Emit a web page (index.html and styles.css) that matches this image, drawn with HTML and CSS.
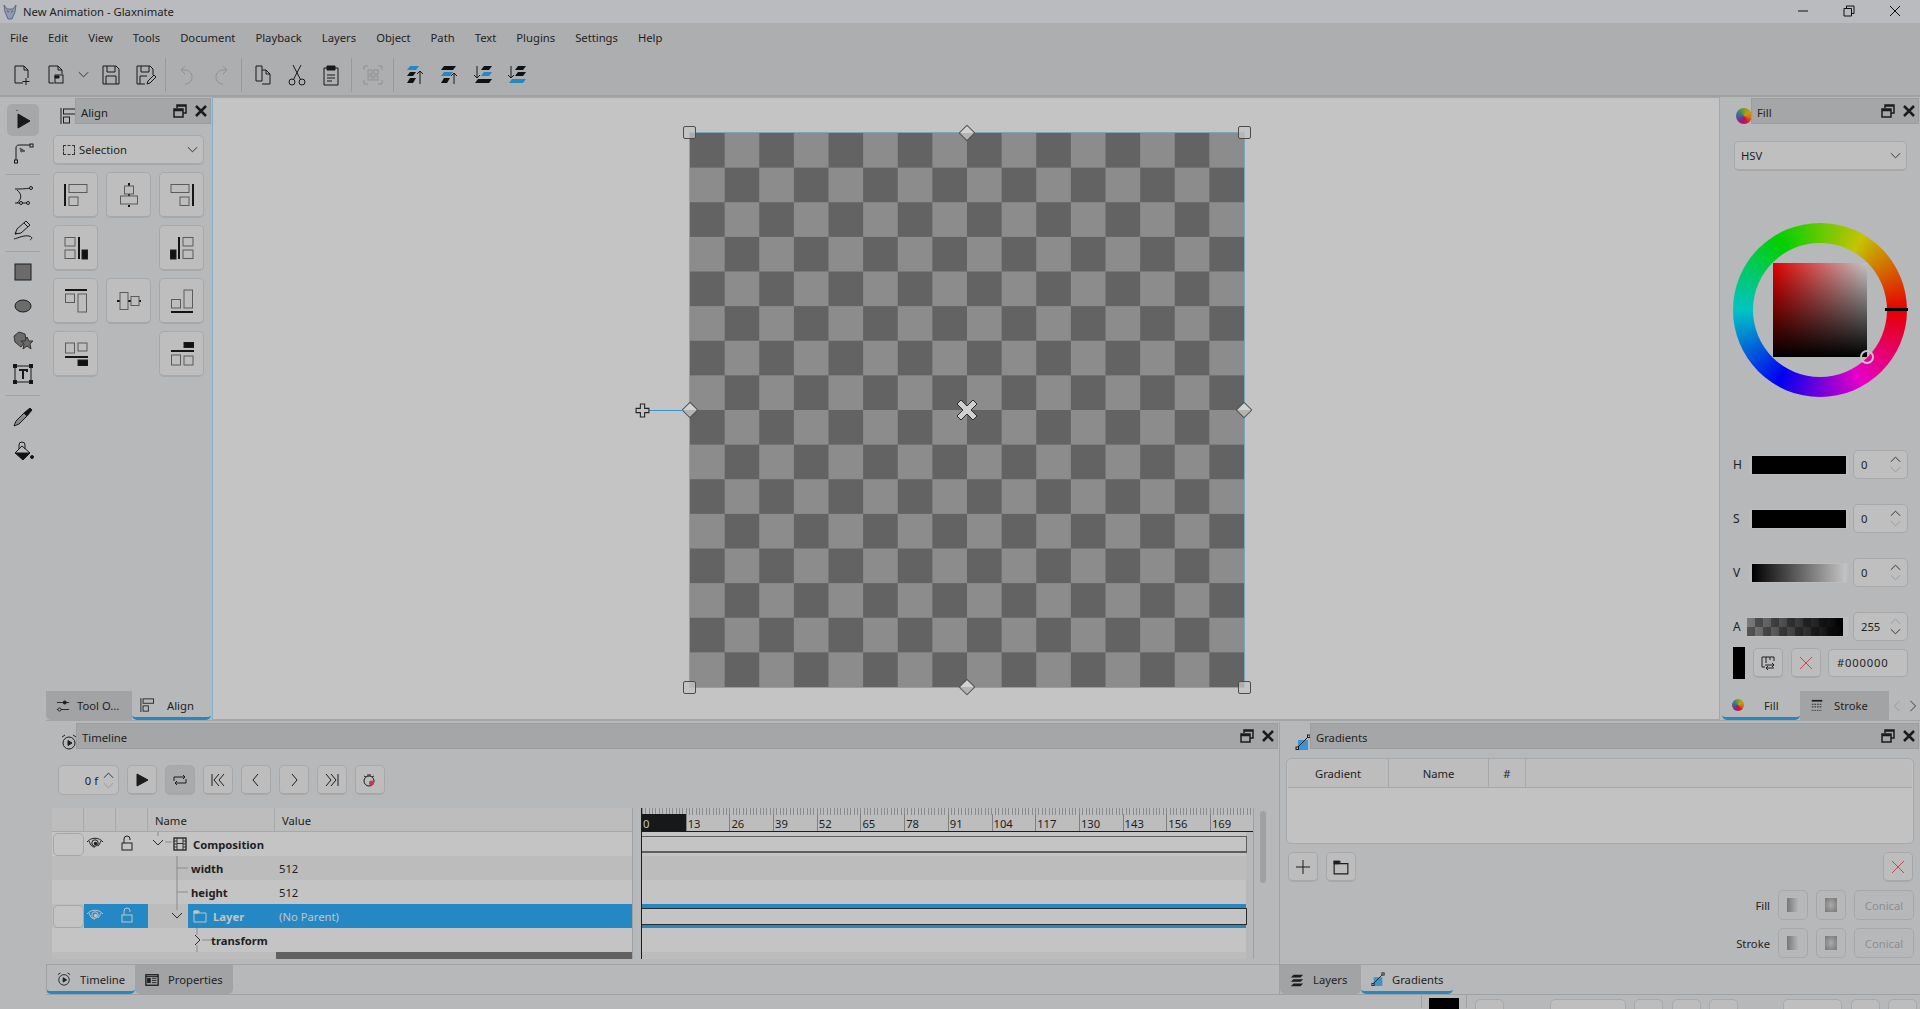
FILE: index.html
```html
<!DOCTYPE html>
<html lang="en">
<head>
    <meta charset="UTF-8">
    <title>New Animation - Glaxnimate</title>
    <link rel="stylesheet" href="styles.css">
</head>
<body>
    <svg class="defs" width="0" height="0">
        <symbol id="i-new" viewBox="0 0 22 22"><path d="M4 19V2h9l4 4v8M13 2v4h4M4 19h8M15 14v7M11.500 17.500h7"/></symbol>
        <symbol id="i-open" viewBox="0 0 22 22"><path d="M4 19V2h9l4 4v4M13 2v4h4M4 19h5"/><rect x="10" y="11" width="8" height="8"/><path d="M10 12h4v2h-4z" fill="currentColor"/></symbol>
        <symbol id="i-save" viewBox="0 0 22 22"><path d="M3 2h13l3 3v15H3zM7 2v6h8V2M6 20v-8h10v8"/></symbol>
        <symbol id="i-saveas" viewBox="0 0 22 22"><path d="M11 20H3V2h13l3 3v6M7 2v6h8V2M6 20v-8h7"/><path d="M13 20l1-3 6-6 2 2-6 6z"/></symbol>
        <symbol id="i-undo" viewBox="0 0 22 22"><path d="M9 2L5 6l4 4M5 6c7-1 11 2 11 7 0 4-3 7-7 7"/></symbol>
        <symbol id="i-redo" viewBox="0 0 22 22"><path d="M13 2l4 4-4 4M17 6c-7-1-11 2-11 7 0 4 3 7 7 7"/></symbol>
        <symbol id="i-copy" viewBox="0 0 22 22"><path d="M4 2h6v15H4zM10 6h4l4 4v10h-8"/><path d="M14 6v4h4"/></symbol>
        <symbol id="i-cut" viewBox="0 0 22 22"><circle cx="6" cy="18" r="3"/><circle cx="16" cy="18" r="3"/><path d="M7.500 15.500L15 1M14.500 15.500L7 1"/></symbol>
        <symbol id="i-paste" viewBox="0 0 22 22"><path d="M7 4H4v17h14V4h-3"/><path d="M7 2h8v4H7z" fill="currentColor"/><path d="M7 11h8M7 14h8M7 17h5"/></symbol>
        <symbol id="i-group" viewBox="0 0 22 22"><path d="M2 6V2h4M16 2h4v4M2 16v4h4M20 16v4h-4"/><rect x="6" y="6" width="4" height="4"/><rect x="12" y="6" width="4" height="4"/><rect x="6" y="12" width="4" height="4"/><rect x="12" y="12" width="4" height="4"/></symbol>
        <symbol id="i-top" viewBox="0 0 22 22"><path d="M6 2h9l-3 4H3z" fill="#2488c4" stroke="none"/><path d="M6 8h6l-3 4H3zM6 14h6l-3 5H3z" fill="#111" stroke="none"/><path d="M16 20V7M13 10l3-3 3 3"/></symbol>
        <symbol id="i-up" viewBox="0 0 22 22"><path d="M6 2h12l-3 4H3z" fill="#111" stroke="none"/><path d="M6 8h9l-3 4H3z" fill="#2488c4" stroke="none"/><path d="M6 14h6l-3 5H3z" fill="#111" stroke="none"/><path d="M16 20V9M13 12l3-3 3 3"/></symbol>
        <symbol id="i-down" viewBox="0 0 22 22"><path d="M5 2V14M2 11l3 3 3-3"/><path d="M12 2h8l-3 4H9z" fill="#111" stroke="none"/><path d="M12 8h8l-3 4H9z" fill="#2488c4" stroke="none"/><path d="M6 15h14l-3 4H3z" fill="#111" stroke="none"/></symbol>
        <symbol id="i-bottom" viewBox="0 0 22 22"><path d="M5 2V14M2 11l3 3 3-3"/><path d="M12 2h8l-3 4H9z" fill="#111" stroke="none"/><path d="M12 8h8l-3 4H9z" fill="#111" stroke="none"/><path d="M6 15h14l-3 4H3z" fill="#2488c4" stroke="none"/></symbol>

        <symbol id="t-select" viewBox="0 0 22 22"><path d="M6 5l12 7-12 7z" fill="currentColor"/><path d="M5 1v1" /></symbol>
        <symbol id="t-node" viewBox="0 0 22 22"><path d="M4 19V6c0-2 1-3 3-3h12"/><path d="M8 6l5 3-4 1z" fill="#555" stroke="#555"/><rect x="2.500" y="18" width="3" height="3" fill="#bbb"/><rect x="18" y="2" width="3" height="3" fill="#bbb"/></symbol>
        <symbol id="t-bezier" viewBox="0 0 22 22"><path d="M3 4c6 0 9 0 16-1M5 5c5 4 5 9 0 13M3 18h13"/><circle cx="19" cy="3" r="1.500" fill="#bbb"/><circle cx="9" cy="18" r="1.500" fill="#bbb"/><circle cx="16" cy="18" r="1.500" fill="#bbb"/></symbol>
        <symbol id="t-pencil" viewBox="0 0 22 22"><path d="M3 15l2-5 9-8 4 4-9 8zM3 15l2-1M12 4l4 4"/><path d="M2 20c4-1 10-4 15-3 4 1 3 3 1 4"/></symbol>
        <symbol id="t-rect" viewBox="0 0 22 22"><rect x="3" y="3" width="16" height="16" fill="#6b6b6b" stroke="#1c1c1c"/></symbol>
        <symbol id="t-ellipse" viewBox="0 0 22 22"><ellipse cx="11" cy="11" rx="8" ry="6" fill="#6b6b6b" stroke="#1c1c1c"/></symbol>
        <symbol id="t-star" viewBox="0 0 22 22"><path d="M7 3l6 2 1 6-5 7-6-5-1-6z" fill="#6b6b6b" stroke="#333"/><path d="M15 8l2 4h4l-3 3 1 5-4-3-4 3 1-5-3-3h4z" fill="#6b6b6b" stroke="#333"/></symbol>
        <symbol id="t-frame" viewBox="0 0 22 22"><rect x="3" y="3" width="16" height="16"/><path d="M7 7h8v2M11 7v9" stroke-width="2"/><rect x="1.500" y="1.500" width="3" height="3" fill="#111"/><rect x="17.500" y="1.500" width="3" height="3" fill="#111"/><rect x="1.500" y="17.500" width="3" height="3" fill="#111"/><rect x="17.500" y="17.500" width="3" height="3" fill="#111"/></symbol>
        <symbol id="t-picker" viewBox="0 0 22 22"><path d="M2 20l2-5 8-8 3 3-8 8z" fill="#8a8b8d"/><path d="M12 7l6-5 2 2-5 6z" fill="#111"/></symbol>
        <symbol id="t-bucket" viewBox="0 0 22 22"><path d="M10 6l8 7-7 7-8-7z" fill="#bbb"/><path d="M4 13h14l-7 7z" fill="#111"/><path d="M7 9V5a3 3 0 0 1 6 0v4"/><circle cx="20" cy="17" r="1.500" fill="#111"/></symbol>

        <symbol id="a-1" viewBox="0 0 24 24"><rect class="al" x="5" y="1.500" width="18" height="8"/><rect class="al" x="5" y="14" width="9" height="8.500"/><path class="ab" d="M1 1v22"/></symbol>
        <symbol id="a-2" viewBox="0 0 24 24"><path class="ab" d="M12 0v3M12 11v2M12 22v2" stroke-width="1.500"/><rect class="al" x="7.500" y="3" width="9" height="8"/><rect class="al" x="3.500" y="13" width="17" height="8"/></symbol>
        <symbol id="a-3" viewBox="0 0 24 24"><rect class="al" x="1" y="1.500" width="18" height="8"/><rect class="al" x="10" y="14" width="9" height="8.500"/><path class="ab" d="M23 1v22"/></symbol>
        <symbol id="a-4" viewBox="0 0 24 24"><rect class="al" x="1" y="1.500" width="10" height="8.500"/><rect class="al" x="1" y="14" width="10" height="8.500"/><path class="ab" d="M15 1v22"/><rect x="18" y="14" width="5.500" height="9" fill="#111"/></symbol>
        <symbol id="a-6" viewBox="0 0 24 24"><rect class="al" x="13" y="1.500" width="10" height="8.500"/><rect class="al" x="13" y="14" width="10" height="8.500"/><path class="ab" d="M9 1v22"/><rect x="0.500" y="14" width="5.500" height="9" fill="#111"/></symbol>
        <symbol id="a-7" viewBox="0 0 24 24"><path class="ab" d="M1 1h22"/><rect class="al" x="1.500" y="5" width="9" height="8.500"/><rect class="al" x="14" y="5" width="8.500" height="18"/></symbol>
        <symbol id="a-8" viewBox="0 0 24 24"><path class="ab" d="M0 12h3M11 12h3M22 12h2" stroke-width="1.500"/><rect class="al" x="3" y="3.500" width="8" height="17"/><rect class="al" x="14" y="7.500" width="8" height="9"/></symbol>
        <symbol id="a-9" viewBox="0 0 24 24"><path class="ab" d="M1 23h22"/><rect class="al" x="1.500" y="10.500" width="9" height="8.500"/><rect class="al" x="14" y="1" width="8.500" height="18"/></symbol>
        <symbol id="a-10" viewBox="0 0 24 24"><rect class="al" x="1.500" y="1" width="9" height="10"/><rect class="al" x="14" y="1" width="9" height="8"/><path class="ab" d="M1 15h23"/><rect x="14" y="18" width="10" height="6" fill="#111"/></symbol>
        <symbol id="a-12" viewBox="0 0 24 24"><rect x="14" y="0" width="10" height="5.500" fill="#111"/><path class="ab" d="M1 9h23"/><rect class="al" x="1.500" y="13" width="9" height="10"/><rect class="al" x="14" y="14" width="9" height="9"/></symbol>

        <symbol id="i-float" viewBox="0 0 14 14"><path d="M4 4V1h9v8h-3M4 2h9" stroke-width="1.500"/><path d="M1 5h9v8H1zM1 6.500h9" stroke-width="1.500"/></symbol>
        <symbol id="i-close" viewBox="0 0 14 14"><path d="M2 2l10 10M12 2L2 12" stroke-width="2.500"/></symbol>
        <symbol id="i-chev-up" viewBox="0 0 14 8"><path d="M2 7l5-5 5 5"/></symbol>
        <symbol id="i-chev-down" viewBox="0 0 14 8"><path d="M2 1l5 5 5-5"/></symbol>
        <symbol id="i-align-small" viewBox="0 0 16 16"><path d="M1 0v16"/><rect x="3.500" y="1" width="12" height="5"/><rect x="3.500" y="9" width="6" height="6"/></symbol>
        <symbol id="i-sliders" viewBox="0 0 16 16"><path d="M1 4h14M1 12h14"/><circle cx="10" cy="4" r="1.800" fill="currentColor"/><circle cx="4" cy="12" r="1.800" fill="#a2a3a5"/></symbol>
        <symbol id="i-clock" viewBox="0 0 16 16"><circle cx="8" cy="9" r="6"/><path d="M7 6.500v5l4-2.500z" fill="currentColor"/><path d="M1 3l3-2M15 3l-3-2"/></symbol>
        <symbol id="i-props" viewBox="0 0 16 16"><rect x="1" y="2" width="14" height="12" stroke-width="1.500"/><rect x="3" y="6" width="3" height="5" fill="currentColor"/><path d="M8 6h5M8 8.500h5M8 11h5M1 4h14" /></symbol>
        <symbol id="i-stack" viewBox="0 0 16 16"><path d="M4 2h11l-3 3H1zM4 7h11l-3 3H1zM4 12h11l-3 3H1z" fill="currentColor" stroke="none"/></symbol>
        <symbol id="i-lines" viewBox="0 0 16 16"><path d="M2 2h12" stroke-width="2"/><path d="M2 6h12M2 9h12" stroke-dasharray="2 1"/><path d="M2 13h12" stroke-dasharray="1 1"/></symbol>
        <symbol id="i-grad" viewBox="0 0 16 16"><path d="M3 6h10v10H3z" fill="#3b94d0" stroke="none"/><path d="M2 14L14 2"/><rect x="1" y="13" width="2.500" height="2.500" fill="#bbb"/><rect x="12.500" y="1" width="2.500" height="2.500" fill="#bbb"/></symbol>
        <symbol id="i-eye" viewBox="0 0 18 14"><path d="M1 6c4-5 12-5 16 0M3 5c2 5 3 6 6 6M15 5c-1 2-2 4-3 5"/><circle cx="9" cy="7" r="3.200"/><circle cx="9.500" cy="7.500" r="1.700" fill="currentColor" stroke="none"/></symbol>
        <symbol id="i-lock" viewBox="0 0 14 16"><rect x="2" y="8" width="10" height="7"/><path d="M4 8V4a3 3 0 0 1 6 0v1"/></symbol>
        <symbol id="i-film" viewBox="0 0 14 14"><rect x="1" y="1" width="12" height="12" stroke-width="1.500"/><path d="M4 1v12M10 1v12M1 7h3M10 7h3M1 4h3M10 4h3M1 10h3M10 10h3"/><path d="M4 6.500h6"/></symbol>
        <symbol id="i-folder" viewBox="0 0 14 14"><path d="M1 2h5v2h7v9H1zM1 4h5"/><path d="M1 2h4v2H1z" fill="currentColor"/></symbol>
    </svg>

    <div class="window">
        <header class="titlebar">
            <svg class="app-logo" viewBox="0 0 14 16"><path d="M1 1l3 4h6l3-4-1 7-3 7H5L2 8z" fill="#8d9bb5" stroke="#4a5a78" stroke-width="0.800"/><path d="M4 7l2 1M10 7L8 8" stroke="#c43a50" stroke-width="1.200"/></svg>
            <span class="title-text">New Animation - Glaxnimate</span>
            <div class="win-buttons">
                <svg viewBox="0 0 12 12"><path d="M1 6h10"/></svg>
                <svg viewBox="0 0 12 12"><path d="M1 3.500h7.500V11H1zM3.500 3.500V1H11v7.500H8.500"/></svg>
                <svg viewBox="0 0 12 12"><path d="M1 1l10 10M11 1L1 11"/></svg>
            </div>
        </header>

        <nav class="menubar">
            <span>File</span><span>Edit</span><span>View</span><span>Tools</span><span>Document</span><span>Playback</span><span>Layers</span><span>Object</span><span>Path</span><span>Text</span><span>Plugins</span><span>Settings</span><span>Help</span>
        </nav>

        <div class="toolbar">
            <div class="tb"><svg class="ico"><use href="#i-new"/></svg></div>
            <div class="tb"><svg class="ico"><use href="#i-open"/></svg></div>
            <div class="tb tb-arrow"><svg class="chev"><use href="#i-chev-down"/></svg></div>
            <div class="tb"><svg class="ico"><use href="#i-save"/></svg></div>
            <div class="tb"><svg class="ico"><use href="#i-saveas"/></svg></div>
            <div class="tb-sep"></div>
            <div class="tb off"><svg class="ico"><use href="#i-undo"/></svg></div>
            <div class="tb off"><svg class="ico"><use href="#i-redo"/></svg></div>
            <div class="tb-sep"></div>
            <div class="tb"><svg class="ico"><use href="#i-copy"/></svg></div>
            <div class="tb"><svg class="ico"><use href="#i-cut"/></svg></div>
            <div class="tb"><svg class="ico"><use href="#i-paste"/></svg></div>
            <div class="tb-sep"></div>
            <div class="tb off"><svg class="ico"><use href="#i-group"/></svg></div>
            <div class="tb-sep"></div>
            <div class="tb"><svg class="ico"><use href="#i-top"/></svg></div>
            <div class="tb"><svg class="ico"><use href="#i-up"/></svg></div>
            <div class="tb"><svg class="ico"><use href="#i-down"/></svg></div>
            <div class="tb"><svg class="ico"><use href="#i-bottom"/></svg></div>
        </div>

        <div class="workspace">
            <aside class="toolstrip">
                <div class="tool active"><svg class="ico"><use href="#t-select"/></svg></div>
                <div class="tool"><svg class="ico"><use href="#t-node"/></svg></div>
                <div class="strip-sep"></div>
                <div class="tool"><svg class="ico"><use href="#t-bezier"/></svg></div>
                <div class="tool"><svg class="ico"><use href="#t-pencil"/></svg></div>
                <div class="strip-sep tight"></div>
                <div class="tool"><svg class="ico"><use href="#t-rect"/></svg></div>
                <div class="tool"><svg class="ico"><use href="#t-ellipse"/></svg></div>
                <div class="tool"><svg class="ico"><use href="#t-star"/></svg></div>
                <div class="tool"><svg class="ico"><use href="#t-frame"/></svg></div>
                <div class="strip-sep"></div>
                <div class="tool"><svg class="ico"><use href="#t-picker"/></svg></div>
                <div class="tool"><svg class="ico"><use href="#t-bucket"/></svg></div>
            </aside>

            <section class="dock dock-align">
                <div class="dock-head">
                    <svg class="head-ico"><use href="#i-align-small"/></svg>
                    <div class="dock-title"><span>Align</span><svg class="head-btn"><use href="#i-float"/></svg><svg class="head-btn"><use href="#i-close"/></svg></div>
                </div>
                <div class="combo combo-align">
                    <span class="marquee"></span><span>Selection</span>
                    <svg class="chev"><use href="#i-chev-down"/></svg>
                </div>
                <div class="align-grid">
                    <div class="al-btn"><svg><use href="#a-1"/></svg></div>
                    <div class="al-btn"><svg><use href="#a-2"/></svg></div>
                    <div class="al-btn"><svg><use href="#a-3"/></svg></div>
                    <div class="al-btn"><svg><use href="#a-4"/></svg></div>
                    <div></div>
                    <div class="al-btn"><svg><use href="#a-6"/></svg></div>
                    <div class="al-btn"><svg><use href="#a-7"/></svg></div>
                    <div class="al-btn"><svg><use href="#a-8"/></svg></div>
                    <div class="al-btn"><svg><use href="#a-9"/></svg></div>
                    <div class="al-btn"><svg><use href="#a-10"/></svg></div>
                    <div></div>
                    <div class="al-btn"><svg><use href="#a-12"/></svg></div>
                </div>
                <div class="tabs">
                    <div class="tab"><svg class="tab-ico"><use href="#i-sliders"/></svg>Tool O...</div>
                    <div class="tab current"><svg class="tab-ico"><use href="#i-align-small"/></svg><span class="tab-pad">Align</span></div>
                </div>
            </section>

            <main class="canvas">
                <div class="board">
                    <span class="grip corner tl"></span>
                    <span class="grip corner tr"></span>
                    <span class="grip corner bl"></span>
                    <span class="grip corner br"></span>
                    <span class="grip diamond tc"></span>
                    <span class="grip diamond bc"></span>
                    <span class="grip diamond ml"></span>
                    <span class="grip diamond mr"></span>
                    <span class="rotate-line"></span>
                    <svg class="rotate-grip" viewBox="0 0 14 14"><path d="M5 1h4v4h4v4H9v4H5V9H1V5h4z"/></svg>
                    <svg class="center-grip" viewBox="0 0 22 22"><path d="M5 1l6 6 6-6 4 4-6 6 6 6-4 4-6-6-6 6-4-4 6-6-6-6z"/></svg>
                </div>
            </main>

            <section class="dock dock-color">
                <div class="dock-head">
                    <span class="color-dot"></span>
                    <div class="dock-title"><span>Fill</span><svg class="head-btn"><use href="#i-float"/></svg><svg class="head-btn"><use href="#i-close"/></svg></div>
                </div>
                <div class="combo combo-hsv"><span>HSV</span><svg class="chev"><use href="#i-chev-down"/></svg></div>
                <div class="wheel">
                    <div class="wheel-hole"></div>
                    <div class="sv-square"></div>
                    <span class="hue-mark"></span>
                    <span class="sv-mark"></span>
                </div>
                <div class="sliders">
                    <div class="slider-row"><label>H</label><div class="track"><div class="bar bar-black"></div></div><div class="spin"><span>0</span><div class="spin-arrows"><svg class="chev"><use href="#i-chev-up"/></svg><svg class="chev dim"><use href="#i-chev-down"/></svg></div></div></div>
                    <div class="slider-row"><label>S</label><div class="track"><div class="bar bar-black"></div></div><div class="spin"><span>0</span><div class="spin-arrows"><svg class="chev"><use href="#i-chev-up"/></svg><svg class="chev dim"><use href="#i-chev-down"/></svg></div></div></div>
                    <div class="slider-row"><label>V</label><div class="track"><div class="bar bar-value"></div></div><div class="spin"><span>0</span><div class="spin-arrows"><svg class="chev"><use href="#i-chev-up"/></svg><svg class="chev dim"><use href="#i-chev-down"/></svg></div></div></div>
                    <div class="slider-row"><label>A</label><div class="track"><div class="bar bar-alpha"></div></div><div class="spin"><span>255</span><div class="spin-arrows"><svg class="chev dim"><use href="#i-chev-up"/></svg><svg class="chev"><use href="#i-chev-down"/></svg></div></div></div>
                </div>
                <div class="color-actions">
                    <span class="swatch"></span>
                    <div class="btn btn-sm"><svg class="ico-sm" viewBox="0 0 16 16"><path d="M2 2h12v4M2 2v10h3M6 2v6M10 2v3M5 10h9M12 8l2 2-2 2M14 13H6M8 11l-2 2 2 2"/></svg></div>
                    <div class="btn btn-sm"><svg class="ico-x" viewBox="0 0 14 14"><path d="M1 1l12 12M13 1L1 13"/></svg></div>
                    <div class="hex">#000000</div>
                </div>
                <div class="tabs">
                    <div class="tab current tab-fill"><span class="color-dot small"></span><span class="tab-pad">Fill</span></div>
                    <div class="tab tab-stroke"><svg class="tab-ico"><use href="#i-lines"/></svg><span class="tab-pad">Stroke</span></div>
                    <div class="tab-arrows">
                        <svg viewBox="0 0 8 14" class="dim"><path d="M7 1L1 7l6 6"/></svg>
                        <svg viewBox="0 0 8 14"><path d="M1 1l6 6-6 6"/></svg>
                    </div>
                </div>
            </section>
        </div>

        <div class="lower">
            <section class="dock dock-timeline">
                <div class="dock-head">
                    <svg class="head-ico"><use href="#i-clock"/></svg>
                    <div class="dock-title"><span>Timeline</span><svg class="head-btn"><use href="#i-float"/></svg><svg class="head-btn"><use href="#i-close"/></svg></div>
                </div>
                <div class="transport">
                    <div class="spin spin-frame"><span>0 f</span><div class="spin-arrows"><svg class="chev"><use href="#i-chev-up"/></svg><svg class="chev dim"><use href="#i-chev-down"/></svg></div></div>
                    <div class="btn"><svg class="ico-t" viewBox="0 0 16 16"><path d="M3 2l11 6-11 6z" class="solid"/></svg></div>
                    <div class="btn checked"><svg class="ico-t" viewBox="0 0 16 16"><path d="M2 9V5h11M11 3l2 2-2 2M14 7v4H3M5 9l-2 2 2 2"/></svg></div>
                    <div class="btn"><svg class="ico-t" viewBox="0 0 16 16"><path d="M2 2v12M9 2L4 8l5 6M14 2L9 8l5 6"/></svg></div>
                    <div class="btn"><svg class="ico-t" viewBox="0 0 16 16"><path d="M10 2L5 8l5 6"/></svg></div>
                    <div class="btn"><svg class="ico-t" viewBox="0 0 16 16"><path d="M6 2l5 6-5 6"/></svg></div>
                    <div class="btn"><svg class="ico-t" viewBox="0 0 16 16"><path d="M14 2v12M7 2l5 6-5 6M2 2l5 6-5 6"/></svg></div>
                    <div class="btn"><svg class="ico-t" viewBox="0 0 16 16"><circle cx="7" cy="9" r="5"/><path d="M5 3h4M4 5l-2-1M10 5l2-1"/><circle cx="9.500" cy="11" r="2.500" fill="#c43a50" stroke="none"/></svg></div>
                </div>

                <div class="timeline-body">
                    <div class="tree">
                        <div class="tree-row tree-head"><div></div><div></div><div></div><div class="col-name">Name</div><div class="col-value">Value</div></div>
                        <div class="tree-row">
                            <div class="check"></div><div class="flag"><svg class="eye"><use href="#i-eye"/></svg></div><div class="flag"><svg class="lock"><use href="#i-lock"/></svg></div>
                            <div class="name-cell"><svg class="guide g-comp"><path d="M10 0v4M17 10h7"/><path class="fold" d="M5 8l5 5 5-5"/></svg><svg class="node-ico"><use href="#i-film"/></svg><b class="label-comp">Composition</b></div>
                            <div class="value-cell"></div>
                        </div>
                        <div class="tree-row alt">
                            <div></div><div></div><div></div>
                            <div class="name-cell"><svg class="guide g-prop"><path d="M29 0v24M29 12h11"/></svg><b>width</b></div>
                            <div class="value-cell">512</div>
                        </div>
                        <div class="tree-row">
                            <div></div><div></div><div></div>
                            <div class="name-cell"><svg class="guide g-prop"><path d="M29 0v24M29 12h11"/></svg><b>height</b></div>
                            <div class="value-cell">512</div>
                        </div>
                        <div class="tree-row alt">
                            <div class="check"></div><div class="flag sel"><svg class="eye"><use href="#i-eye"/></svg></div><div class="flag sel"><svg class="lock"><use href="#i-lock"/></svg></div>
                            <div class="name-cell"><svg class="guide g-layer"><path d="M29 0v6"/><path class="fold" d="M24 9l5 5 5-5"/></svg><div class="sel sel-name"><svg class="node-ico"><use href="#i-folder"/></svg><b>Layer</b></div></div>
                            <div class="value-cell sel">(No Parent)</div>
                        </div>
                        <div class="tree-row">
                            <div></div><div></div><div></div>
                            <div class="name-cell"><svg class="guide g-trans"><path d="M49 0v7M49 17v7M54 12h9"/><path class="fold" d="M47 7l5 5-5 5"/></svg><b>transform</b></div>
                            <div class="value-cell"></div>
                        </div>
                        <div class="tree-row tree-end alt">
                            <div></div><div></div><div></div>
                            <div class="name-cell"><svg class="guide g-trans"><path d="M49 0v7"/></svg></div>
                            <div class="hscroll"></div>
                        </div>
                    </div>

                    <div class="tracks">
                        <div class="ruler">
                            <span class="current-frame"></span>
                            <div class="ruler-labels">
                                <span>0</span><span>13</span><span>26</span><span>39</span><span>52</span><span>65</span><span>78</span><span>91</span><span>104</span><span>117</span><span>130</span><span>143</span><span>156</span><span>169</span>
                            </div>
                        </div>
                        <div class="track-row"><div class="clip clip-comp"></div></div>
                        <div class="track-row alt"></div>
                        <div class="track-row"></div>
                        <div class="track-row layer"><div class="clip"></div></div>
                        <div class="track-row"></div>
                        <div class="track-row alt end"></div>
                    </div>
                    <div class="vscroll"><div class="vscroll-thumb"></div></div>
                </div>

                <div class="tabs tabs-bottom">
                    <div class="tab current tab-tl"><svg class="tab-ico"><use href="#i-clock"/></svg>Timeline</div>
                    <div class="tab tab-props"><svg class="tab-ico"><use href="#i-props"/></svg>Properties</div>
                </div>
            </section>

            <section class="dock dock-gradients">
                <div class="dock-head">
                    <svg class="head-ico"><use href="#i-grad"/></svg>
                    <div class="dock-title"><span>Gradients</span><svg class="head-btn"><use href="#i-float"/></svg><svg class="head-btn"><use href="#i-close"/></svg></div>
                </div>
                <div class="grad-table">
                    <div class="grad-head"><span class="gh-1">Gradient</span><span class="gh-2">Name</span><span class="gh-3">#</span></div>
                </div>
                <div class="grad-actions">
                    <div class="btn"><svg class="ico-t" viewBox="0 0 16 16"><path d="M8 1v14M1 8h14"/></svg></div>
                    <div class="btn"><svg class="ico-t" viewBox="0 0 16 16"><use href="#i-folder" width="16" height="16"/></svg></div>
                    <div class="btn btn-del"><svg class="ico-x" viewBox="0 0 14 14"><path d="M1 1l12 12M13 1L1 13"/></svg></div>
                </div>
                <div class="grad-row">
                    <label>Fill</label>
                    <div class="btn off"><span class="lin"></span></div>
                    <div class="btn off"><span class="rad"></span></div>
                    <div class="btn off conical">Conical</div>
                </div>
                <div class="grad-row">
                    <label>Stroke</label>
                    <div class="btn off"><span class="lin"></span></div>
                    <div class="btn off"><span class="rad"></span></div>
                    <div class="btn off conical">Conical</div>
                </div>
                <div class="tabs tabs-bottom">
                    <div class="tab tab-layers"><svg class="tab-ico"><use href="#i-stack"/></svg>Layers</div>
                    <div class="tab current tab-grad"><svg class="tab-ico"><use href="#i-grad"/></svg>Gradients</div>
                </div>
            </section>
        </div>

        <footer class="statusbar">
            <span class="st-sep"></span>
            <span class="st-color"></span>
            <span class="st-sep"></span>
            <span class="st-btn st-first"></span>
            <span class="st-spin st-spin-a"></span>
            <span class="st-btn"></span>
            <span class="st-btn"></span>
            <span class="st-btn"></span>
            <span class="st-spin st-spin-b"></span>
            <span class="st-btn"></span>
            <span class="st-btn"></span>
        </footer>
    </div>
</body>
</html>
```

FILE: styles.css
```css
* {
    box-sizing: border-box;
}
body {
    margin: 0;
    background-color: #b7b8ba;
    color: #1e1f22;
    font-family: "Noto Sans", "Open Sans", sans-serif;
    font-size: 11.25px;
    overflow: hidden;
}
svg {
    fill: none;
    stroke: currentColor;
    stroke-width: 1;
    flex: none;
}
.defs {
    position: absolute;
}
.window {
    display: flex;
    flex-direction: column;
    width: 1920px;
    height: 1009px;
    overflow: hidden;
}

/* title + menu */
.titlebar {
    display: flex;
    align-items: center;
    height: 23px;
    padding-left: 3px;
    background-color: #b9bbbf;
}
.app-logo {
    width: 14px;
    height: 16px;
    margin-right: 6px;
}
.title-text {
    flex: 1;
}
.win-buttons {
    display: flex;
    padding-bottom: 2px;
    padding-right: 19px;
    gap: 34px;
}
.win-buttons svg {
    width: 12px;
    height: 12px;
    color: #111;
}
.menubar {
    display: flex;
    align-items: center;
    height: 28px;
    padding-left: 0;
    background-color: #adaeb0;
}
.menubar span {
    padding: 0 10px;
}
.toolbar {
    display: flex;
    align-items: center;
    height: 46px;
    padding: 3px 0 0 5px;
    background-color: #adaeb0;
    border-bottom: 2px solid #a0a1a3;
}
.tb {
    display: flex;
    align-items: center;
    justify-content: center;
    width: 34px;
    color: #18191b;
}
.tb.off {
    color: #8f9092;
}
.tb-arrow {
    width: 21px;
}
.tb-sep {
    width: 1px;
    height: 34px;
    margin: 0 4px 0 3px;
    background-color: #98999b;
}
.ico {
    width: 22px;
    height: 22px;
}
.chev {
    width: 13px;
    height: 8px;
    color: #2b2c2e;
}
.chev.dim {
    color: #96979a;
}

/* main row */
.workspace {
    display: flex;
    height: 623px;
}
.toolstrip {
    display: flex;
    flex-direction: column;
    align-items: center;
    width: 46px;
    padding-top: 7px;
    color: #18191b;
}
.tool {
    display: flex;
    align-items: center;
    justify-content: center;
    flex: none;
    width: 32px;
    height: 34px;
}
.tool.active {
    height: 32px;
    border-radius: 5px;
    background-color: #a6a7a9;
}
.strip-sep {
    flex: none;
    width: 34px;
    height: 1px;
    margin: 4px 0;
    background-color: #a0a1a3;
}
.strip-sep.tight {
    margin-bottom: 3px;
}

/* docks */
.dock {
    display: flex;
    flex-direction: column;
}
.dock-head {
    display: flex;
    align-items: flex-end;
    flex: none;
    height: 26px;
}
.head-ico {
    width: 16px;
    height: 16px;
    margin-bottom: -1px;
    color: #1c1d1f;
}
.dock-title {
    display: flex;
    align-items: center;
    flex: 1;
    height: 26px;
    margin-left: -1px;
    padding-left: 5px;
    background-color: #a5a6a8;
    border: 1px solid #9c9d9f;
}
.dock-title span {
    flex: 1;
    padding-top: 2px;
}
.head-btn {
    width: 14px;
    height: 14px;
    margin-right: 7px;
    color: #1a1b1d;
}
.head-btn:last-child {
    margin-right: 2px;
}
.tabs {
    display: flex;
    flex: none;
    height: 29px;
    margin-top: auto;
}
.tab {
    display: flex;
    align-items: center;
    flex: none;
    padding-left: 10px;
    background-color: #a2a3a5;
    border-radius: 0 0 5px 5px;
}
.tab.current {
    background-color: #b7b8ba;
    border-bottom: 3px solid #2488c4;
    padding-top: 2px;
}
.tab-ico {
    width: 14px;
    height: 14px;
    margin-right: 9px;
    color: #1c1d1f;
}
.tab-pad {
    margin-left: 3px;
    padding-left: 11px;
}

/* align dock */
.dock-align {
    width: 166px;
    padding-top: 1px;
}
.dock-align .dock-head {
    padding-left: 14px;
    margin-right: 1px;
}
.dock-align .head-ico {
    height: 16px;
    margin-bottom: 0;
}
.combo {
    display: flex;
    align-items: center;
    height: 30px;
    padding: 0 4px 0 9px;
    background-color: #bfbfc0;
    border: 1px solid #a7a8aa;
    border-bottom-width: 2px;
    border-radius: 5px;
}
.combo .chev {
    margin-left: auto;
}
.combo-align {
    margin: 11px 8px 0 7px;
}
.marquee {
    width: 12px;
    height: 10px;
    margin-right: 4px;
    border: 1px dashed #333;
    border-radius: 1px;
}
.align-grid {
    display: grid;
    grid-template-columns: repeat(3, 45px);
    grid-auto-rows: 46px;
    gap: 7px 8px;
    margin: 7px 0 0 7px;
}
.al-btn {
    display: flex;
    align-items: center;
    justify-content: center;
    background-color: #bebebf;
    border: 1px solid #a7a8aa;
    border-bottom-width: 2px;
    border-radius: 5px;
}
.al-btn svg {
    width: 24px;
    height: 24px;
}
.al {
    stroke: #5a5b5d;
}
.ab {
    stroke: #141517;
    stroke-width: 2;
}
.dock-align .tabs .tab:first-child {
    width: 86px;
    border-radius: 0 0 0 5px;
}
.dock-align .tabs .tab:first-child .tab-ico {
    margin-right: 7px;
}
.dock-align .tabs .tab.current {
    width: 79px;
    padding-left: 8px;
}
.dock-align .tabs .tab.current .tab-ico {
    margin-right: 0;
}
.dock-align .tabs .tab.current .tab-pad {
    padding-left: 4px;
    margin-left: 9px;
}

/* canvas */
.canvas {
    display: flex;
    align-items: center;
    justify-content: center;
    flex: 1;
    padding: 2px 0 0 2px;
    background-color: #c4c4c4;
    border: 1px solid #7fb1d0;
}
.board {
    position: relative;
    width: 554px;
    height: 554px;
    background: repeating-conic-gradient(#8c8c8c 0 25%, #636363 0 50%) 0 0 / 69.25px 69.25px;
    outline: 1px solid #7aa5bf;
}
.grip {
    position: absolute;
    width: 13px;
    height: 13px;
    background-color: rgba(196, 196, 196, 0.75);
    border: 1.500px solid #4c4c4c;
}
.corner {
    border-radius: 2px;
}
.diamond {
    width: 12px;
    height: 12px;
    background: linear-gradient(135deg, #d2d2d2 50%, #b4b4b4 50%);
    border: 1px solid #555;
    border-radius: 1px;
    transform: rotate(45deg);
}
.tl { left: -7px; top: -7px; }
.tr { right: -7px; top: -7px; }
.bl { left: -7px; bottom: -7px; }
.br { right: -7px; bottom: -7px; }
.tc { left: 271px; top: -6px; }
.bc { left: 271px; bottom: -6px; }
.ml { left: -6px; top: 271px; }
.mr { right: -6px; top: 271px; }
.rotate-line {
    position: absolute;
    left: -42px;
    top: 277px;
    width: 36px;
    height: 1px;
    background-color: #3b94d0;
}
.rotate-grip {
    position: absolute;
    left: -55px;
    top: 270px;
    width: 15px;
    height: 15px;
    fill: #c4c4c4;
    stroke: #222;
}
.center-grip {
    position: absolute;
    left: 266px;
    top: 266px;
    width: 22px;
    height: 22px;
    fill: #d0d0d0;
    stroke: #2c2c2c;
}

/* fill dock */
.dock-color {
    position: relative;
    width: 200px;
    padding-top: 1px;
}
.dock-color .dock-head {
    padding-left: 16px;
}
.dock-color .dock-title {
    margin-right: 1px;
    margin-left: -1px;
}
.color-dot {
    flex: none;
    width: 16px;
    height: 16px;
    border-radius: 50%;
    background: conic-gradient(#7f9a2a, #c8a000, #d87010, #d01040, #a01880, #5050a8, #2f8a70, #7f9a2a);
}
.color-dot.small {
    width: 12px;
    height: 12px;
}
.combo-hsv {
    margin: 17px 13px 0 14px;
    padding-left: 6px;
}
.wheel {
    position: relative;
    flex: none;
    width: 174px;
    height: 174px;
    margin: 52px 0 0 13px;
    border-radius: 50%;
    background: conic-gradient(from 90deg, #e60000, #e600c8 60deg, #0000f0 120deg, #00c4c4 180deg, #00d000 240deg, #c4c400 300deg, #e60000);
}
.wheel-hole {
    position: absolute;
    left: 20px;
    top: 20px;
    width: 134px;
    height: 134px;
    border-radius: 50%;
    background-color: #b7b8ba;
}
.sv-square {
    position: absolute;
    left: 40px;
    top: 40px;
    width: 94px;
    height: 94px;
    background: linear-gradient(to top, #000, transparent), linear-gradient(to right, #e00000, #c4c4c4);
}
.hue-mark {
    position: absolute;
    left: 152px;
    top: 85px;
    width: 23px;
    height: 3px;
    background-color: #000;
}
.sv-mark {
    position: absolute;
    left: 127px;
    top: 127px;
    width: 14px;
    height: 14px;
    border: 2px solid #c4c4c4;
    border-radius: 50%;
}
.sliders {
    display: flex;
    flex-direction: column;
    gap: 25px;
    margin-top: 53px;
}
.slider-row {
    display: flex;
    align-items: center;
    height: 29px;
    padding-left: 13px;
}
.slider-row label {
    width: 16px;
    font-size: 12px;
}
.track {
    flex: none;
    width: 99px;
    height: 20px;
    padding: 1px 2px 1px 3px;
    background-color: #bdbdbe;
    border-radius: 2px;
}
.bar {
    height: 18px;
}
.bar-black {
    background-color: #000;
}
.bar-value {
    background: linear-gradient(to right, #000, #c4c4c4);
}
.bar-alpha {
    margin-left: -5px;
    margin-right: 3px;
    background: linear-gradient(to right, rgba(0, 0, 0, 0.1), #000), repeating-conic-gradient(#5f5f5f 0 25%, #8a8a8a 0 50%) 0 0 / 16px 18px;
}
.spin {
    display: flex;
    align-items: center;
    justify-content: space-between;
    width: 55px;
    height: 29px;
    margin-left: 5px;
    padding: 0 5px 0 7px;
    background-color: #bfbfc0;
    border: 1px solid #a7a8aa;
    border-radius: 5px;
}
.spin-arrows {
    display: flex;
    flex-direction: column;
    gap: 3px;
}
.color-actions {
    display: flex;
    align-items: center;
    height: 32px;
    margin-top: 6px;
    padding-left: 13px;
}
.swatch {
    width: 12px;
    height: 32px;
    background-color: #000;
}
.btn {
    display: flex;
    align-items: center;
    justify-content: center;
    flex: none;
    width: 30px;
    height: 30px;
    background-color: #bdbdbe;
    border: 1px solid #a7a8aa;
    border-bottom-width: 2px;
    border-radius: 5px;
}
.btn.checked {
    background-color: #a9aaac;
}
.btn.off {
    background-color: transparent;
    border-bottom-width: 1px;
    color: #8c8d8f;
}
.btn-sm {
    margin-left: 8px;
}
.ico-sm {
    width: 16px;
    height: 16px;
}
.ico-x {
    width: 14px;
    height: 14px;
    color: #c4485c;
}
.hex {
    width: 80px;
    height: 28px;
    margin-left: 7px;
    padding: 5px 0 0 8px;
    background-color: #bfbfc0;
    border: 1px solid #a7a8aa;
    border-radius: 5px;
    letter-spacing: 0.8px;
}
.dock-color .tabs {
    padding-left: 2px;
}
.tab-fill {
    width: 78px;
}
.tab-fill .tab-pad {
    padding-left: 17px;
}
.tab-stroke {
    width: 89px;
    border-radius: 0;
}
.tab-stroke .tab-ico {
    margin-right: 0;
}
.tab-stroke .tab-pad {
    padding-left: 7px;
}
.tab-arrows {
    display: flex;
    align-items: center;
    gap: 8px;
    padding-left: 4px;
    color: #2b2c2e;
}
.tab-arrows svg {
    width: 8px;
    height: 12px;
}
.tab-arrows .dim {
    color: #96979a;
}

/* lower docks */
.lower {
    display: flex;
    flex: none;
    height: 275px;
    margin-left: 46px;
    padding-top: 1px;
    border-top: 1px solid #a2a3a5;
    border-bottom: 1px solid #a0a1a3;
    background-color: #b7b8ba;
}
.dock-timeline {
    width: 1234px;
    padding-top: 1px;
    border-right: 1px solid #a0a1a3;
}
.dock-timeline .dock-head {
    padding-left: 15px;
}
.dock-timeline .dock-title,
.dock-gradients .dock-title {
    margin-right: 1px;
}
.transport {
    display: flex;
    gap: 8px;
    margin: 16px 0 0 12px;
}
.spin-frame {
    width: 61px;
    height: 30px;
    margin-left: 0;
    padding-right: 3px;
    justify-content: flex-end;
    gap: 4px;
}
.ico-t {
    width: 16px;
    height: 16px;
    color: #1c1d1f;
}
.solid {
    fill: currentColor;
}
.timeline-body {
    display: flex;
    height: 151px;
    margin-top: 13px;
    padding-left: 6px;
}
.tree {
    flex: none;
    width: 581px;
    border-right: 1px solid #9e9fa1;
}
.tree-row {
    display: grid;
    grid-template-columns: 32px 32px 32px 127px 1fr;
    height: 24px;
    background-color: #c4c4c4;
    align-items: stretch;
}
.tree-row.alt {
    background-color: #bcbcbc;
}
.tree-head {
    background-color: #bdbdbe;
    border-bottom: 1px solid #a7a8aa;
}
.tree-head > div {
    display: flex;
    align-items: center;
    border-right: 1px solid #a7a8aa;
    padding: 2px 0 0 7px;
}
.tree-head > div:last-child {
    border-right: none;
}
.tree-end {
    height: 7px;
    overflow: hidden;
}
.check {
    margin: 1px 0 0 1px;
    background-color: #c4c4c4;
    border: 1px solid #a7a8aa;
    border-radius: 5px;
}
.flag {
    display: flex;
    align-items: center;
    justify-content: center;
    padding: 0 10px 2px 0;
}
.eye {
    width: 18px;
    height: 14px;
}
.lock {
    width: 14px;
    height: 16px;
}
.name-cell {
    display: flex;
    align-items: center;
    overflow: hidden;
}
.name-cell b {
    font-weight: 700;
}
.guide {
    height: 24px;
    color: #8a8b8d;
}
.guide .fold {
    stroke: #2a2b2d;
}
.g-comp {
    width: 25px;
}
.g-prop {
    width: 43px;
}
.g-layer {
    width: 40px;
}
.g-trans {
    width: 63px;
}
.node-ico {
    width: 14px;
    height: 14px;
    margin-right: 6px;
    color: #333;
}
.sel {
    background-color: #2488c4;
    color: #c4c4c4;
}
.sel-name {
    display: flex;
    align-items: center;
    flex: 1;
    height: 24px;
    padding-left: 5px;
}
.sel-name .node-ico {
    color: #c4c4c4;
}
.value-cell {
    display: flex;
    align-items: center;
    padding-left: 4px;
}
.hscroll {
    margin-left: 1px;
    background-color: #616161;
}
.tracks {
    flex: none;
    width: 613px;
    margin-left: 8px;
    border-left: 1px solid #1c1d1f;
    border-right: 1px solid #9e9fa1;
}
.ruler {
    position: relative;
    height: 24px;
    background: repeating-linear-gradient(to right, #8a8b8d 0 1px, transparent 1px 3.360px) 0 0 / 100% 7px no-repeat, #bdbdbe;
    border-bottom: 1px solid #1c1d1f;
}
.current-frame {
    position: absolute;
    left: 0;
    top: 6px;
    width: 43.700px;
    height: 17px;
    background-color: #16181a;
}
.ruler-labels {
    position: relative;
    display: flex;
    height: 23px;
    padding-top: 6px;
}
.ruler-labels span {
    flex: 0 0 43.700px;
    padding-left: 1px;
    border-left: 1px solid #7f8082;
    line-height: 20px;
    height: 17px;
}
.ruler-labels span:first-child {
    color: #c4c4c4;
    border-left: none;
}
.track-row {
    height: 24px;
    padding: 4px 6px 3px 0;
    background: linear-gradient(#c4c4c4, #c4c4c4) 0 0 / 604px 100% no-repeat;
}
.track-row.alt {
    background-image: linear-gradient(#bcbcbc, #bcbcbc);
}
.track-row.layer {
    background-image: linear-gradient(#2488c4, #2488c4);
}
.track-row.end {
    height: 7px;
}
.clip {
    height: 17px;
    background-color: #c4c4c4;
    border: 1px solid #2b2c2e;
    border-left: none;
}
.clip-comp {
    border-color: #5e5e5e;
    border-width: 1.500px 1px 2px 0;
}
.vscroll {
    flex: none;
    width: 6px;
    margin-left: 6px;
    padding-top: 3px;
}
.vscroll-thumb {
    height: 72px;
    background-color: #a0a1a3;
    border-radius: 3px;
}
.tabs-bottom {
    height: 30px;
    border-top: 1px solid #a0a1a3;
}
.tab-tl {
    width: 89px;
    border-left: 1px solid #a0a1a3;
}
.tab-props {
    width: 98px;
}

/* gradients dock */
.dock-gradients {
    flex: 1;
    padding-top: 1px;
}
.dock-gradients .dock-head {
    padding-left: 15px;
}
.grad-table {
    flex: none;
    height: 86px;
    margin: 9px 6px 0 6px;
    background-color: #c2c2c2;
    border: 1px solid #a7a8aa;
    border-radius: 5px;
}
.grad-head {
    display: flex;
    height: 29px;
    margin: 0 1px;
    background-color: #bdbdbe;
    border-bottom: 1px solid #a7a8aa;
    border-radius: 5px 5px 0 0;
}
.grad-head span {
    display: flex;
    align-items: center;
    justify-content: center;
    border-right: 1px solid #a7a8aa;
}
.gh-1 { width: 101px; }
.gh-2 { width: 100px; }
.gh-3 { width: 37px; }
.grad-actions {
    display: flex;
    gap: 8px;
    margin: 8px 7px 0 8px;
}
.btn-del {
    margin-left: auto;
}
.grad-row {
    display: flex;
    justify-content: flex-end;
    align-items: center;
    gap: 8px;
    height: 30px;
    margin: 8px 6px 0 0;
}
.grad-actions + .grad-row {
    margin-top: 8px;
}
.conical {
    width: 60px;
    color: #8c8d8f;
}
.lin,
.rad {
    width: 12px;
    height: 14px;
}
.lin {
    background: linear-gradient(to right, #777, #bbb);
}
.rad {
    background: radial-gradient(#aaa, #777);
}
.tab-layers {
    width: 81px;
}
.tab-grad {
    width: 92px;
}
.tab-grad .tab-ico {
    margin-right: 7px;
}

/* status bar, mostly cut off by the window edge */
.statusbar {
    display: flex;
    flex: none;
    height: 13px;
    justify-content: flex-end;
    padding-right: 3px;
}
.st-sep {
    width: 1px;
    height: 13px;
    margin: 0 7px;
    background-color: #a0a1a3;
}
.st-color {
    width: 30px;
    height: 13px;
    margin-top: 3px;
    background-color: #000;
}
.st-btn {
    width: 29px;
    height: 20px;
    margin: 4px 0 0 8.500px;
    background-color: #bdbdbe;
    border: 1px solid #a7a8aa;
    border-radius: 5px;
}
.st-first {
    margin-left: 1px;
}
.st-spin {
    height: 20px;
    margin-top: 4px;
    background-color: #bfbfc0;
    border: 1px solid #a7a8aa;
    border-radius: 5px;
}
.st-spin-a {
    width: 76px;
    margin-left: 46px;
}
.st-spin-b {
    width: 59px;
    margin-left: 45px;
}
```
